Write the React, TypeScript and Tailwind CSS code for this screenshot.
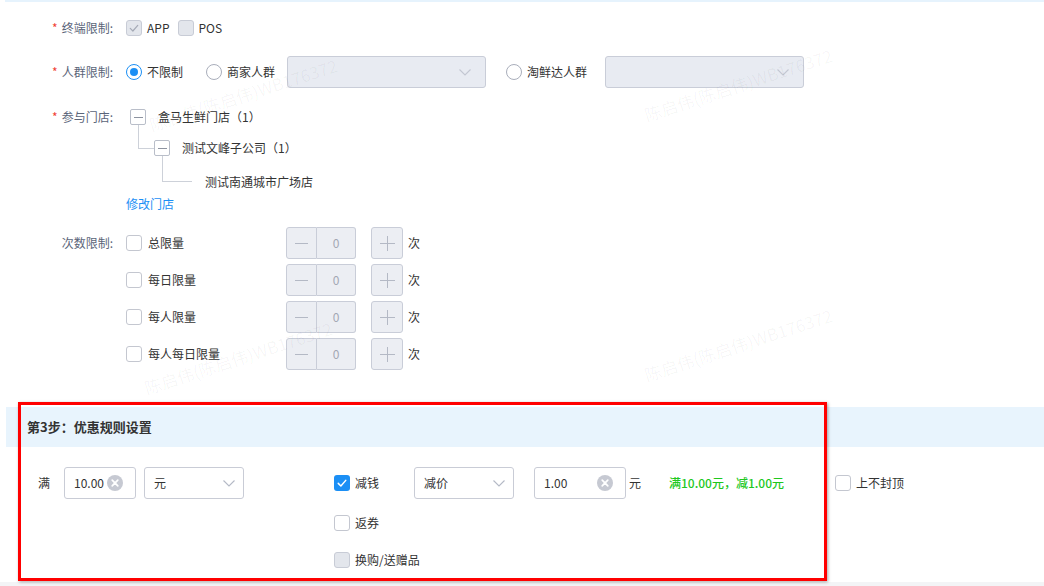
import React from "react";

const FONT = { fontFamily: '"Noto Sans CJK SC", "Liberation Sans", sans-serif' };

function Check({ checked = false, disabled = false }: { checked?: boolean; disabled?: boolean }) {
  if (checked && !disabled) {
    return (
      <span className="flex h-4 w-4 shrink-0 items-center justify-center rounded-[3px] bg-[#1b8ff5]">
        <svg viewBox="0 0 16 16" className="h-3 w-3">
          <path d="M3 8.5 6.5 12 13 4.5" fill="none" stroke="#fff" strokeWidth="2" strokeLinecap="round" strokeLinejoin="round" />
        </svg>
      </span>
    );
  }
  return (
    <span
      className={
        disabled
          ? "flex h-4 w-4 shrink-0 items-center justify-center rounded-[3px] border border-[#c8ccd6] bg-[#e3e6ec]"
          : "flex h-4 w-4 shrink-0 items-center justify-center rounded-[3px] border border-[#c4c7d0] bg-white"
      }
    >
      {checked && (
        <svg viewBox="0 0 16 16" className="h-3 w-3">
          <path d="M3 8.5 6.5 12 13 4.5" fill="none" stroke="#a5aab6" strokeWidth="1.6" strokeLinecap="round" strokeLinejoin="round" />
        </svg>
      )}
    </span>
  );
}

function Radio({ checked = false }: { checked?: boolean }) {
  return (
    <span
      className={
        checked
          ? "flex h-4 w-4 shrink-0 items-center justify-center rounded-full border border-[#1b8ff5] bg-white"
          : "flex h-4 w-4 shrink-0 items-center justify-center rounded-full border border-[#a9aebb] bg-white"
      }
    >
      {checked && <span className="h-2 w-2 rounded-full bg-[#1b8ff5]" />}
    </span>
  );
}

function Chevron({ color = "#b4b9c6" }: { color?: string }) {
  return (
    <svg viewBox="0 0 16 16" className="h-4 w-4">
      <path d="M2.5 5.5 8 11l5.5-5.5" fill="none" stroke={color} strokeWidth="1.1" />
    </svg>
  );
}

function ClearIcon() {
  return (
    <svg viewBox="0 0 16 16" className="h-4 w-4">
      <circle cx="8" cy="8" r="8" fill="#c6c9d2" />
      <path d="M5.2 5.2l5.6 5.6M10.8 5.2l-5.6 5.6" stroke="#fff" strokeWidth="1.7" strokeLinecap="round" />
    </svg>
  );
}

function Label({ text, required = false }: { text: string; required?: boolean }) {
  return (
    <div className="flex w-[114px] shrink-0 justify-end pr-[1px] text-[12px] text-[#5b6579]">
      {required && <span className="mr-[4px] text-[#f04134]">*</span>}
      <span>{text}</span>
    </div>
  );
}

function DisabledSelect() {
  return (
    <div className="flex h-8 w-[199px] items-center justify-end rounded-[3px] border border-[#c9cdd8] bg-[#e8ebf2] pr-3">
      <Chevron color="#c3c7d2" />
    </div>
  );
}

function TreeBox() {
  return (
    <span className="flex h-[16px] w-[16px] shrink-0 items-center justify-center rounded-[2px] border border-[#b9bec9] bg-white">
      <span className="h-px w-[9px] bg-[#8d93a0]" />
    </span>
  );
}

function Stepper() {
  return (
    <div className="flex items-center">
      <div className="flex h-8 w-[31px] items-center justify-center rounded-l-[3px] border border-[#c9cdd8] bg-[#eceef3]">
        <span className="h-px w-[13px] bg-[#b4b9c5]" />
      </div>
      <div className="flex h-8 w-[39px] items-center justify-center rounded-r-[3px] border border-l-0 border-[#c9cdd8] bg-[#eceef3] text-[12px] text-[#a3a8b4]">
        0
      </div>
      <div className="relative ml-[15px] flex h-8 w-[32px] items-center justify-center rounded-[3px] border border-[#c9cdd8] bg-[#eceef3]">
        <span className="absolute h-px w-[15px] bg-[#b4b9c5]" />
        <span className="absolute h-[15px] w-px bg-[#b4b9c5]" />
      </div>
      <span className="ml-[5px] text-[12px] text-[#333]">次</span>
    </div>
  );
}

const limits = ["总限量", "每日限量", "每人限量", "每人每日限量"];

function Watermark({ className }: { className: string }) {
  return (
    <div
      className={"pointer-events-none absolute -rotate-[18deg] whitespace-nowrap text-[17px] text-[#000]/[0.04] " + className}
    >
      陈启伟(陈启伟)WB176372
    </div>
  );
}

export default function App() {
  return (
    <div className="relative h-[586px] w-[1044px] overflow-hidden bg-white text-[12px] text-[#333]" style={FONT}>
      <div className="ml-[5px] h-[2px] bg-[#e6f3fd]" />

      {/* 终端限制 */}
      <div className="mt-[10px] flex h-8 items-center">
        <Label text="终端限制:" required />
        <div className="ml-[12px] flex items-center">
          <Check checked disabled />
          <span className="ml-[5px]">APP</span>
          <span className="ml-[8px]">
            <Check disabled />
          </span>
          <span className="ml-[5px]">POS</span>
        </div>
      </div>

      {/* 人群限制 */}
      <div className="mt-[12px] flex h-8 items-center">
        <Label text="人群限制:" required />
        <div className="ml-[12px] flex items-center">
          <Radio checked />
          <span className="ml-[5px]">不限制</span>
          <span className="ml-[23px]">
            <Radio />
          </span>
          <span className="ml-[5px]">商家人群</span>
          <div className="ml-[12px]">
            <DisabledSelect />
          </div>
          <span className="ml-[20px]">
            <Radio />
          </span>
          <span className="ml-[5px]">淘鲜达人群</span>
          <div className="ml-[18px]">
            <DisabledSelect />
          </div>
        </div>
      </div>

      {/* 参与门店 */}
      <div className="mt-[21px] flex">
        <div className="flex h-4 items-center">
          <Label text="参与门店:" required />
        </div>
        <div className="ml-[16px]">
          <div className="flex h-4 items-center">
            <TreeBox />
            <span className="ml-[12px]">盒马生鲜门店（1）</span>
          </div>
          <div className="ml-[8px] flex">
            <div className="h-[24px] w-[16px] border-b border-l border-[#cdd1d9]" />
            <div className="mt-[15px] flex h-4 items-center">
              <TreeBox />
              <span className="ml-[12px]">测试文峰子公司（1）</span>
            </div>
          </div>
          <div className="ml-[32px] flex">
            <div className="h-[26px] w-[30px] border-b border-l border-[#cdd1d9]" />
            <div className="mt-[18px] flex h-4 items-center pl-[13px]">测试南通城市广场店</div>
          </div>
        </div>
      </div>
      <div className="mt-[5px] pl-[126px] text-[#1b8ff5]">修改门店</div>

      {/* 次数限制 */}
      <div className="mt-[14px] flex">
        <div className="flex h-8 items-center">
          <Label text="次数限制:" />
        </div>
        <div className="ml-[12px] flex flex-col gap-[5px]">
          {limits.map((l) => (
            <div key={l} className="flex h-8 items-center">
              <div className="flex w-[160px] items-center">
                <Check />
                <span className="ml-[6px]">{l}</span>
              </div>
              <Stepper />
            </div>
          ))}
        </div>
      </div>

      {/* 第3步 */}
      <div className="ml-[6px] mt-[37px] flex h-10 items-center bg-[#e8f4fd] pl-[21px] text-[13px] font-bold text-[#333]">
        第3步：优惠规则设置
      </div>

      <div className="mt-[20px] flex">
        <div className="flex h-8 w-[334px] items-center">
          <span className="w-[64px] pl-[38px]">满</span>
          <div className="flex h-8 w-[72px] items-center justify-between rounded-[3px] border border-[#c9ccd6] pl-[9px] pr-[12px]">
            <span className="text-[12px]">10.00</span>
            <ClearIcon />
          </div>
          <div className="ml-[8px] flex h-8 w-[100px] items-center justify-between rounded-[3px] border border-[#c9ccd6] pl-[9px] pr-[6px]">
            <span>元</span>
            <Chevron />
          </div>
        </div>
        <div className="flex flex-col">
          <div className="flex h-8 items-center">
            <div className="flex w-[80px] items-center">
              <Check checked />
              <span className="ml-[5px]">减钱</span>
            </div>
            <div className="flex h-8 w-[100px] items-center justify-between rounded-[3px] border border-[#c9ccd6] pl-[9px] pr-[6px]">
              <span>减价</span>
              <Chevron />
            </div>
            <div className="ml-[20px] flex h-8 w-[92px] items-center justify-between rounded-[3px] border border-[#c9ccd6] pl-[9px] pr-[12px]">
              <span>1.00</span>
              <ClearIcon />
            </div>
            <span className="ml-[3px]">元</span>
            <span className="ml-[28px] w-[166px] font-medium text-[#1ec81e]">满10.00元，减1.00元</span>
            <Check />
            <span className="ml-[5px]">上不封顶</span>
          </div>
          <div className="mt-[8px] flex h-8 items-center">
            <Check />
            <span className="ml-[5px]">返券</span>
          </div>
          <div className="mt-[5px] flex h-8 items-center">
            <Check disabled />
            <span className="ml-[5px]">换购/送赠品</span>
          </div>
        </div>
      </div>

      <div className="absolute bottom-0 left-0 right-0 h-[4px] bg-[#f3f4f6]" />

      {/* 红框标注 */}
      <div className="pointer-events-none absolute left-[18px] top-[402px] h-[179px] w-[809px] border-[3px] border-[#ff0000] shadow-[1px_1px_3px_rgba(0,0,0,0.35)]" />

      <Watermark className="left-[145px] top-[82px]" />
      <Watermark className="left-[640px] top-[72px]" />
      <Watermark className="left-[140px] top-[345px]" />
      <Watermark className="left-[640px] top-[332px]" />
    </div>
  );
}
